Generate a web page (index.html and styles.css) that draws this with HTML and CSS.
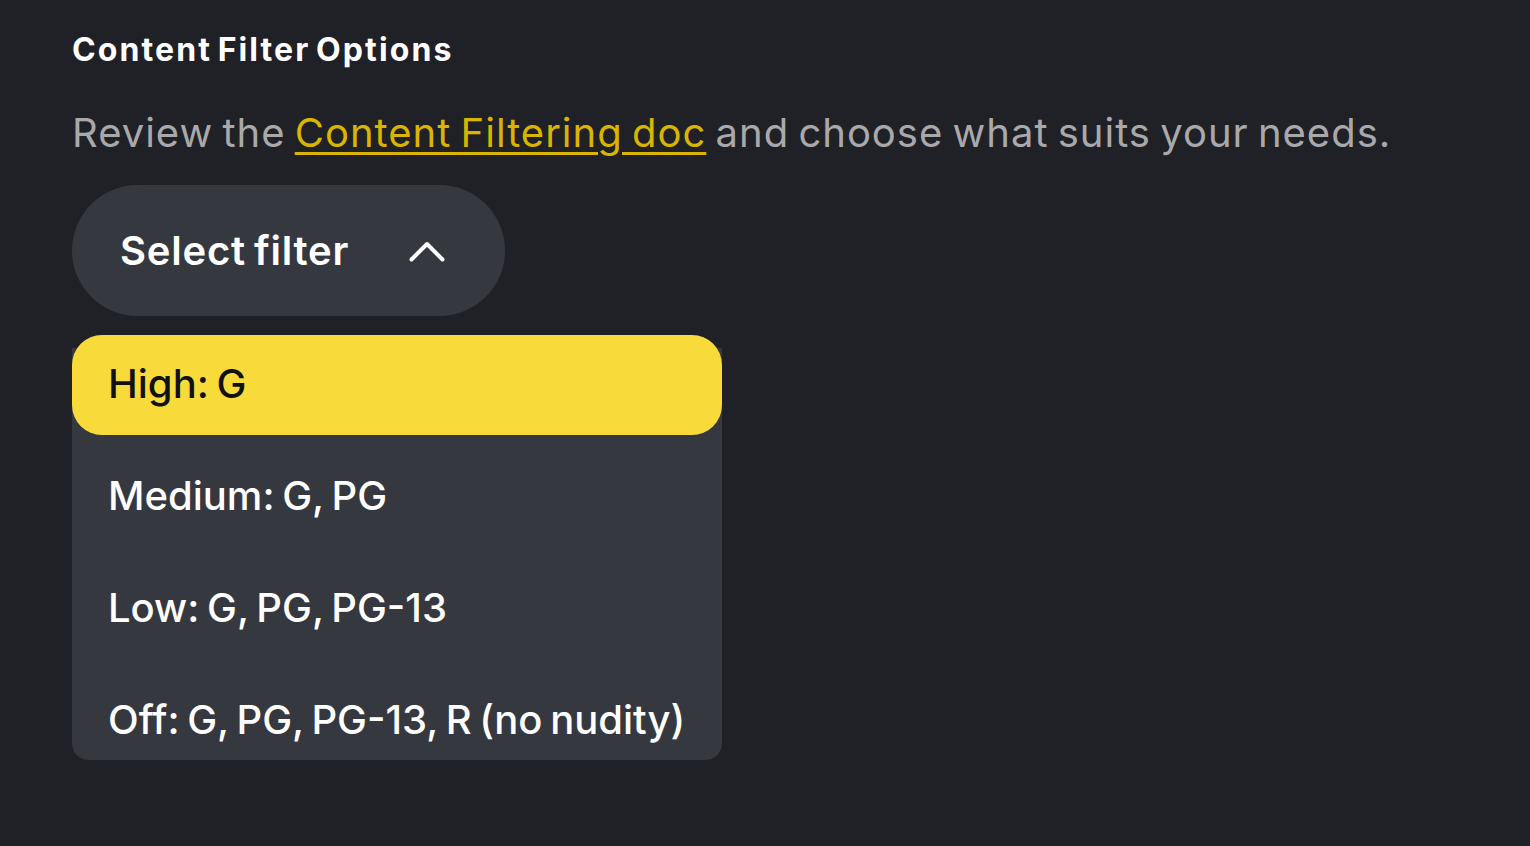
FILE: index.html
```html
<!DOCTYPE html>
<html lang="en">
<head>
<meta charset="utf-8">
<title>Content Filter Options</title>
<link rel="stylesheet" href="styles.css">
</head>
<body>
<main class="page">
  <h1 class="title">Content Filter Options</h1>
  <p class="subtitle">Review the <a class="doc-link" href="#">Content Filtering doc</a> and choose what suits your needs.</p>
  <button class="select" type="button">
    <span class="select-label">Select filter</span>
    <svg class="chevron" width="36" height="22" viewBox="0 0 36 22" aria-hidden="true">
      <path d="M2.5 19.5 L18 4 L33.5 19.5" fill="none" stroke="#ffffff" stroke-width="4" stroke-linecap="round" stroke-linejoin="round"/>
    </svg>
  </button>
  <ul class="menu">
    <li class="option option-active">High: G</li>
    <li class="option">Medium: G, PG</li>
    <li class="option">Low: G, PG, PG-13</li>
    <li class="option">Off: G, PG, PG-13, R (no nudity)</li>
  </ul>
</main>
</body>
</html>
```

FILE: styles.css
```css
* { box-sizing: border-box; }
html, body {
  margin: 0;
  padding: 0;
  background: #202127;
  height: 100%;
}
body {
  font-family: Inter, "Noto Sans", sans-serif;
  color: #ffffff;
  overflow: hidden;
}
.page {
  padding: 32px 72px 0 72px;
  display: flex;
  flex-direction: column;
  align-items: flex-start;
}
.title {
  margin: 0;
  font-size: 32px;
  line-height: 36px;
  font-weight: 700;
  letter-spacing: 2.1px;
  word-spacing: -4px;
}
.subtitle {
  margin: 40px 0 0 0;
  font-size: 40px;
  line-height: 50px;
  font-weight: 400;
  color: #a9a9ab;
  letter-spacing: 1px;
  word-spacing: -3px;
}
.doc-link {
  color: #d9b500;
  text-decoration: underline;
  text-decoration-thickness: 3px;
  text-underline-offset: 5px;
}
.select {
  margin-top: 27px;
  height: 131px;
  width: 433px;
  border: none;
  border-radius: 66px;
  background: #363840;
  color: #ffffff;
  font-family: inherit;
  display: flex;
  align-items: center;
  padding: 0 60px 0 48px;
  justify-content: space-between;
  cursor: pointer;
}
.select-label {
  font-size: 40px;
  font-weight: 600;
  letter-spacing: 0.8px;
  word-spacing: -3px;
}
.chevron { display: block; }
.menu {
  list-style: none;
  margin: 19px 0 0 0;
  padding: 0;
  width: 650px;
  height: 425px;
  position: relative;
  display: flex;
  flex-direction: column;
  gap: 12px;
  clip-path: inset(0 round 0 0 16px 16px);
}
.menu::before {
  content: "";
  position: absolute;
  left: 0;
  right: 0;
  top: 13px;
  bottom: 0;
  background: #363840;
  border-radius: 0 0 16px 16px;
  z-index: 0;
}
.option {
  position: relative;
  z-index: 1;
  flex: 0 0 100px;
  height: 100px;
  display: flex;
  align-items: center;
  padding: 0 0 4px 36px;
  font-size: 40px;
  font-weight: 500;
  letter-spacing: 0;
  word-spacing: -3px;
  color: #ffffff;
  border-radius: 30px;
}
.option-active {
  background: #f8db3b;
  color: #111111;
}
```
